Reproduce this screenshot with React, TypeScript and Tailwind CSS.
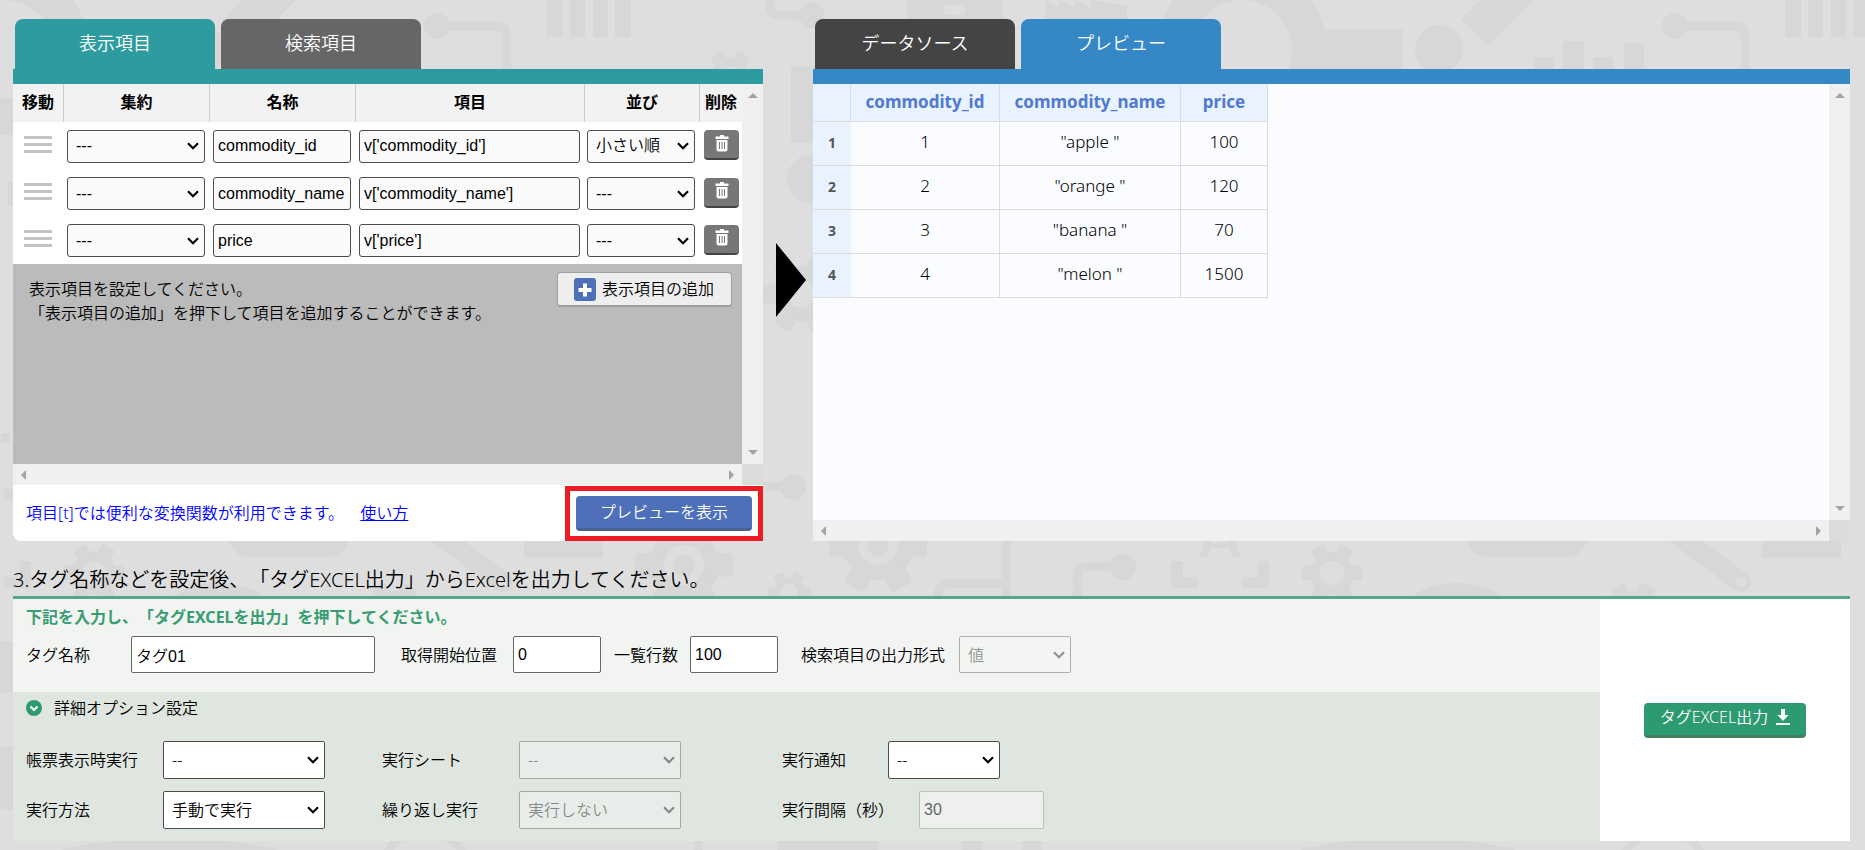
import type { ReactNode } from "react";
import { clsx } from "clsx";

const TILE_WIDTH = 1238;
const TILE_OFFSETS = [0, TILE_WIDTH, TILE_WIDTH * 2];

interface DisplayItem {
  name: string;
  expression: string;
  order: string;
}

const DISPLAY_ITEMS: DisplayItem[] = [
  { name: "commodity_id", expression: "v['commodity_id']", order: "小さい順" },
  { name: "commodity_name", expression: "v['commodity_name']", order: "---" },
  { name: "price", expression: "v['price']", order: "---" },
];

const PREVIEW_ROWS = [
  ["1", '"apple "', "100"],
  ["2", '"orange "', "120"],
  ["3", '"banana "', "70"],
  ["4", '"melon "', "1500"],
];

function Gear({ x, y, r, hole, teeth = 6 }: { x: number; y: number; r: number; hole: number; teeth?: number }) {
  return (
    <g transform={`translate(${x} ${y})`}>
      <circle r={r * 0.72} />
      {Array.from({ length: teeth }, (_, i) => (
        <rect key={i} x={-r * 0.24} y={-r} width={r * 0.48} height={r * 0.6} rx={r * 0.1} transform={`rotate(${(360 / teeth) * i + 30})`} />
      ))}
      <circle r={hole} fill="#dedede" />
      {r > 40 && <circle r={hole * 0.55} />}
    </g>
  );
}

function BackdropTile({ offset }: { offset: number }) {
  return (
    <g transform={`translate(${offset} 0)`} fill="#d7d7d7">
      {/* magnifier ring and camera */}
      <path fillRule="evenodd" d="M-81 50a85 85 0 1 0 170 0a85 85 0 1 0-170 0zM-46 50a50 50 0 1 1 100 0a50 50 0 1 1-100 0z" />
      <rect x="84" y="30" width="81" height="60" />
      <circle cx="201" cy="49" r="24" />
      <path d="M223 20L262-20L316-20L250 46z" />
      <path d="M296 57h20v40h-20zM325 41h21v56h-21zM355 57h20v40h-20zM386 43h20v54h-20z" />
      <circle cx="437" cy="26" r="13" />
      <path d="M437 26.500H498Q507 26.500 507 36V80" fill="none" stroke="#d7d7d7" strokeWidth="9" />
      <path d="M547 0h16v37h-16zM570 0h15v37h-15zM593 0h15v37h-15zM615 0h16v37h-16z" />
      <Gear x={730} y={78} r={28} hole={11} />
      <path d="M770-4V6Q770 15 780 15H812" fill="none" stroke="#d7d7d7" strokeWidth="9" />
      <circle cx="812" cy="15" r="13" />
      <rect x="791" y="66" width="70" height="77" />
      <circle cx="811" cy="179" r="24" />
      <Gear x={801} y={294} r={39} hole={14} />
      <path d="M760 482h24v9h-24z" />
      <circle cx="793" cy="487" r="13" />
      <path fillRule="evenodd" d="M907-2h96v22h-96zM948 5a5 5 0 0 0 0 10h13a5 5 0 0 0 0-10z" />
      <path d="M1045 20V0l14 6V0l16 8V0l16 8V0l36 6v14z" />
      {/* left strip */}
      <path d="M-10 98h28v36h-28zM8 182h10v24H8zM1 433h9v10H1zM4 489h9v10H4z" />
      {/* lower band */}
      <path d="M20 561h11v27H4v-11h16z" />
      <Gear x={94} y={573} r={30} hole={12} />
      <path d="M228 520H350V532Q350 557 325 557H253Q228 557 228 532z" />
      <ellipse cx="219" cy="626" rx="62" ry="43" />
      <path d="M430 528L503 582" fill="none" stroke="#d7d7d7" strokeWidth="20" strokeLinecap="round" />
      <circle cx="503" cy="582" r="5" fill="#dedede" />
      <Gear x={395} y={614} r={32} hole={12} />
      <rect x="524" y="530" width="79" height="28" />
      <Gear x={684} y={565} r={49} hole={20} />
      <Gear x={789} y={593} r={22} hole={9} />
      <Gear x={878} y={545} r={49} hole={20} />
      <path d="M1006 530V600M1006 583.500H950Q938 583.500 938 597V600M1123 566.500H1087Q1077 566.500 1077 578V600" fill="none" stroke="#d7d7d7" strokeWidth="9" />
      <circle cx="1123" cy="567" r="13" />
      <path d="M1171 561h12v16h15v11h-27z" />
      {/* easel legs over the brackets */}
      <path d="M1206 536h8l-6 21h-8zM1225 536h8l7 21h-8zM1209 543h20v5h-20z" />
      {/* bottom strip */}
      <ellipse cx="170" cy="880" rx="155" ry="42" />
      <circle cx="425" cy="875" r="44" fill="none" stroke="#d7d7d7" strokeWidth="8" />
      <path d="M694 838h9v14h-9zM777 838h101v14H777zM962 838h20v14h-20zM1022 838h20v14h-20z" />
      <circle cx="5" cy="667" r="26" />
      <circle cx="12" cy="778" r="32" />
    </g>
  );
}

function Backdrop() {
  return (
    <svg className="absolute inset-0 h-full w-full" aria-hidden="true">
      {TILE_OFFSETS.map((offset) => <BackdropTile key={offset} offset={offset} />)}
    </svg>
  );
}

function Tab({ className, children }: { className: string; children: ReactNode }) {
  return (
    <button type="button" className={clsx("h-[50px] w-[200px] rounded-t-lg pb-[2px] text-lg text-white", className)}>
      {children}
    </button>
  );
}

function SelectBox({ label, id, value, className, disabled }: { label?: string; id?: string; value: string; className: string; disabled?: boolean }) {
  return (
    <span className={clsx("relative inline-block shrink-0", className, disabled && "opacity-40")}>
      <select
        id={id}
        aria-label={label}
        disabled={disabled}
        className={clsx(
          "h-full w-full appearance-none border border-[#4d4d4d] pl-2 pr-6",
          id ? "rounded-xs" : "rounded-[3px]",
          disabled ? "bg-[#f8f8f8]" : id ? "bg-white" : "bg-[#fafafa]",
        )}
      >
        <option>{value}</option>
      </select>
      <svg className="pointer-events-none absolute right-[6px] top-1/2 h-2 w-3 -translate-y-1/2" viewBox="0 0 12 8" fill="none" stroke="#000" strokeWidth="2.2">
        <path d="M1 1.200L6 6.200L11 1.200" />
      </svg>
    </span>
  );
}

function ScrollArrow({ direction }: { direction: "up" | "down" | "left" | "right" }) {
  const shapes = { up: "M0 5L5 0L10 5z", down: "M0 0L5 5L10 0z", left: "M5 0L0 5L5 10z", right: "M0 0L5 5L0 10z" };
  const vertical = direction === "up" || direction === "down";
  return (
    <svg width={vertical ? 10 : 5} height={vertical ? 5 : 10} fill="#a3a3a3" aria-hidden="true">
      <path d={shapes[direction]} />
    </svg>
  );
}

/* Content with an idle vertical and horizontal scrollbar */
function ScrollFrame({ className, children }: { className?: string; children: ReactNode }) {
  return (
    <div className={clsx("grid grid-cols-[minmax(0,1fr)_21px] grid-rows-[1fr_21px]", className)}>
      <div className="flex flex-col">{children}</div>
      <div className="flex flex-col items-center justify-between bg-[#f0f0f0] py-[9px]">
        <ScrollArrow direction="up" />
        <ScrollArrow direction="down" />
      </div>
      <div className="flex items-center justify-between bg-[#f0f0f0] px-2">
        <ScrollArrow direction="left" />
        <ScrollArrow direction="right" />
      </div>
      <div className="bg-[#dcdcdc]" />
    </div>
  );
}

function TrashIcon() {
  return (
    <svg width="14" height="17" viewBox="0 0 14 17" fill="#fff" aria-hidden="true">
      <path fillRule="evenodd" d="M5 0h4v1.500h4.500V4H.5V1.500H5zM1.500 5h11v9.500a2 2 0 0 1-2 2h-7a2 2 0 0 1-2-2zM4 7v7h1V7zM6.500 7v7h1V7zM9 7v7h1V7z" />
    </svg>
  );
}

function DisplayItemTable() {
  const th = "border-r border-[#ccc] pb-[2px] text-center font-bold";
  return (
    <table className="w-full table-fixed border-separate border-spacing-0 bg-white">
      <colgroup>
        <col className="w-[51px]" />
        <col className="w-[146px]" />
        <col className="w-[146px]" />
        <col />
        <col className="w-[115px]" />
        <col className="w-[42px]" />
      </colgroup>
      <thead className="bg-[#f2f2f2]">
        <tr className="h-[38px]">
          <th className={th}>移動</th>
          <th className={th}>集約</th>
          <th className={th}>名称</th>
          <th className={th}>項目</th>
          <th className={th}>並び</th>
          <th className="pb-[2px] text-center font-bold">削除</th>
        </tr>
      </thead>
      <tbody className="font-['Liberation_Sans','Noto_Sans_CJK_JP',sans-serif]">
        {DISPLAY_ITEMS.map((item) => (
          <tr key={item.name} className="h-[47px] first:h-12">
            <td className="pb-1 pr-[2px]">
              <svg className="mx-auto" width="28" height="17" fill="#c4c4c4" aria-hidden="true">
                <path d="M0 0h28v3H0zM0 7h28v3H0zM0 14h28v3H0z" />
              </svg>
            </td>
            <td className="px-[3px]"><SelectBox label="集約" value="---" className="block h-[33px] w-[138px]" /></td>
            <td className="px-[3px]">
              <input aria-label="名称" defaultValue={item.name} className="block h-[33px] w-[138px] rounded-[3px] border border-[#4d4d4d] bg-[#fafafa] px-1" />
            </td>
            <td className="pl-[3px] pr-[5px]">
              <input aria-label="項目" defaultValue={item.expression} className="block h-[33px] w-full rounded-[3px] border border-[#4d4d4d] bg-[#fafafa] px-1" />
            </td>
            <td className="px-[2px]"><SelectBox label="並び" value={item.order} className="block h-[33px] w-[108px]" /></td>
            <td className="px-1 pb-[2px]">
              <button type="button" aria-label="削除" className="flex h-[30px] w-[35px] items-center justify-center rounded-sm border-b-2 border-[#444] bg-[#777] pb-[2px]">
                <TrashIcon />
              </button>
            </td>
          </tr>
        ))}
      </tbody>
    </table>
  );
}

function ItemPanel() {
  return (
    <section className="w-[750px] shrink-0">
      <div className="flex gap-[6px] px-[2px]">
        <Tab className="bg-[#2d9b9f]">表示項目</Tab>
        <Tab className="bg-[#666]">検索項目</Tab>
      </div>
      <div className="h-[15px] bg-[#2d9b9f]" />
      <ScrollFrame>
        <DisplayItemTable />
        <div className="flex min-h-[200px] items-start justify-between bg-[#bbb] pl-4 pr-[10px]">
          <p className="pt-[13px] leading-6">
            表示項目を設定してください。<br />
            「表示項目の追加」を押下して項目を追加することができます。
          </p>
          <button type="button" className="mt-2 flex h-[35px] w-[175px] items-center gap-[6px] rounded-sm border border-b-2 border-[#a0a0a0] bg-[#eee] pl-4">
            <svg width="22" height="23" aria-hidden="true">
              <rect width="22" height="23" rx="3" fill="#4d70b8" />
              <path d="M11 5.500v13M4.500 12h13" stroke="#fff" strokeWidth="4" />
            </svg>
            表示項目の追加
          </button>
        </div>
      </ScrollFrame>
      <div className="flex h-14 items-end justify-between rounded-bl-lg bg-white pl-[13px]">
        <p className="self-center text-[#0000ff]">
          項目[t]では便利な変換関数が利用できます。 <a href="#usage" className="ml-3 underline">使い方</a>
        </p>
        <div className="border-[5px] border-[#ed1c24] px-[6px] py-[5px]">
          <button type="button" className="block h-[35px] w-[176px] rounded-sm border-b-[3px] border-[#4a608f] bg-[#4d70b8] text-white">
            プレビューを表示
          </button>
        </div>
      </div>
    </section>
  );
}

function PreviewPanel() {
  return (
    <section className="flex min-w-0 flex-1 flex-col">
      <div className="flex gap-[6px] px-[2px]">
        <Tab className="bg-[#444]">データソース</Tab>
        <Tab className="bg-[#3588c5]">プレビュー</Tab>
      </div>
      <div className="h-[15px] bg-[#3588c5]" />
      <ScrollFrame className="flex-1 bg-[#fafcff]">
        <table className="table-fixed self-start border-separate border-spacing-0 text-center font-['Noto_Sans',sans-serif] text-[17px]">
          <colgroup>
            <col className="w-[38px]" />
            <col className="w-[149px]" />
            <col className="w-[181px]" />
            <col className="w-[87px]" />
          </colgroup>
          <thead className="bg-[#e8f3ff] text-[#5079cf]">
            <tr className="h-[38px]">
              <td className="border-b border-r border-[#ddd]" />
              {["commodity_id", "commodity_name", "price"].map((name) => (
                <th key={name} className="border-b border-r border-[#ddd] pb-[2px] font-bold">{name}</th>
              ))}
            </tr>
          </thead>
          <tbody>
            {PREVIEW_ROWS.map((row, i) => (
              <tr key={row[0]} className="h-11">
                <th className="border-b border-[#ddd] bg-[#e8f3ff] pb-[2px] text-sm font-bold text-[#555]">{i + 1}</th>
                {row.map((cell) => (
                  <td key={cell} className="border-b border-r border-[#ddd] pb-[3px]">{cell}</td>
                ))}
              </tr>
            ))}
          </tbody>
        </table>
      </ScrollFrame>
    </section>
  );
}

function Field({ label, id, labelClass, children }: { label: string; id: string; labelClass: string; children: ReactNode }) {
  return (
    <div className="flex items-center">
      <label htmlFor={id} className={clsx("shrink-0", labelClass)}>{label}</label>
      {children}
    </div>
  );
}

function OutputSettings() {
  const input = "rounded-xs border border-[#666] bg-white px-1 font-['Liberation_Sans','Noto_Sans_CJK_JP',sans-serif]";
  return (
    <div className="flex border-t-[3px] border-[#54a78b]">
      <div className="min-w-0 flex-1">
        <div className="h-[93px] bg-[#f1f4f0] pl-[13px] pt-[6px]">
          <p className="font-bold leading-6 text-[#3a9c72]">下記を入力し、「タグEXCELを出力」を押下してください。</p>
          <div className="mt-[7px] flex">
            <Field label="タグ名称" id="tag-name" labelClass="w-[105px]">
              <input id="tag-name" defaultValue="タグ01" className={clsx(input, "h-[37px] w-[244px]")} />
            </Field>
            <div className="w-[26px]" />
            <Field label="取得開始位置" id="start" labelClass="w-28">
              <input id="start" defaultValue="0" className={clsx(input, "h-[37px] w-[88px]")} />
            </Field>
            <div className="w-[13px]" />
            <Field label="一覧行数" id="rows" labelClass="w-[76px]">
              <input id="rows" defaultValue="100" className={clsx(input, "h-[37px] w-[88px]")} />
            </Field>
            <div className="w-[23px]" />
            <Field label="検索項目の出力形式" id="format" labelClass="w-[158px]">
              <SelectBox id="format" value="値" className="h-[37px] w-28" disabled />
            </Field>
          </div>
        </div>
        <div className="h-[149px] bg-[#dee6df] pl-[13px] pt-1">
          <button type="button" className="flex h-6 items-center gap-3">
            <svg width="16" height="16" aria-hidden="true">
              <circle cx="8" cy="8" r="8" fill="#2e9a72" />
              <path d="M4.500 6.500L8 10L11.500 6.500" fill="none" stroke="#fff" strokeWidth="2.200" />
            </svg>
            詳細オプション設定
          </button>
          <div className="mt-[21px] grid grid-cols-[356px_400px_1fr] gap-y-3">
            <Field label="帳票表示時実行" id="on-show" labelClass="w-[137px]">
              <SelectBox id="on-show" value="--" className="h-[38px] w-[162px]" />
            </Field>
            <Field label="実行シート" id="sheet" labelClass="w-[137px]">
              <SelectBox id="sheet" value="--" className="h-[38px] w-[162px]" disabled />
            </Field>
            <Field label="実行通知" id="notice" labelClass="w-[106px]">
              <SelectBox id="notice" value="--" className="h-[38px] w-28" />
            </Field>
            <Field label="実行方法" id="method" labelClass="w-[137px]">
              <SelectBox id="method" value="手動で実行" className="h-[38px] w-[162px]" />
            </Field>
            <Field label="繰り返し実行" id="repeat" labelClass="w-[137px]">
              <SelectBox id="repeat" value="実行しない" className="h-[38px] w-[162px]" disabled />
            </Field>
            <Field label="実行間隔（秒）" id="interval" labelClass="w-[137px]">
              <input
                id="interval"
                defaultValue="30"
                disabled
                className="h-[38px] w-[125px] rounded-xs border border-[#bbc0bc] bg-[#edf0ec] px-1 font-['Liberation_Sans',sans-serif] text-[#666]"
              />
            </Field>
          </div>
        </div>
      </div>
      <div className="flex w-[250px] shrink-0 items-center justify-center bg-white">
        <button type="button" className="flex h-[35px] w-[162px] items-center justify-center gap-2 rounded-sm border-b-[3px] border-[#43805c] bg-[#2e9a72] pb-[3px] text-white">
          タグEXCEL出力
          <svg width="14" height="16" fill="#fff" aria-hidden="true">
            <path d="M5 0h4v6h3.500L7 12L1.500 6H5zM0 14h14v2H0z" />
          </svg>
        </button>
      </div>
    </div>
  );
}

export default function App() {
  return (
    <div className="relative min-h-screen overflow-hidden bg-[#dedede] font-['Noto_Sans','Noto_Sans_CJK_JP',sans-serif] text-base font-[350] leading-6 text-black [text-spacing-trim:space-all]">
      <Backdrop />
      <main className="relative pb-[10px] pl-[13px] pr-[15px] pt-[19px]">
        <div className="flex">
          <ItemPanel />
          <div className="flex w-[50px] shrink-0 items-center pl-[13px]">
            <svg width="30" height="74" aria-hidden="true">
              <path d="M0 0L30 37L0 74z" />
            </svg>
          </div>
          <PreviewPanel />
        </div>
        <h2 className="pb-[3px] pt-[25px] text-[20px] leading-[27px] font-[350]">3.タグ名称などを設定後、「タグEXCEL出力」からExcelを出力してください。</h2>
        <OutputSettings />
      </main>
    </div>
  );
}
